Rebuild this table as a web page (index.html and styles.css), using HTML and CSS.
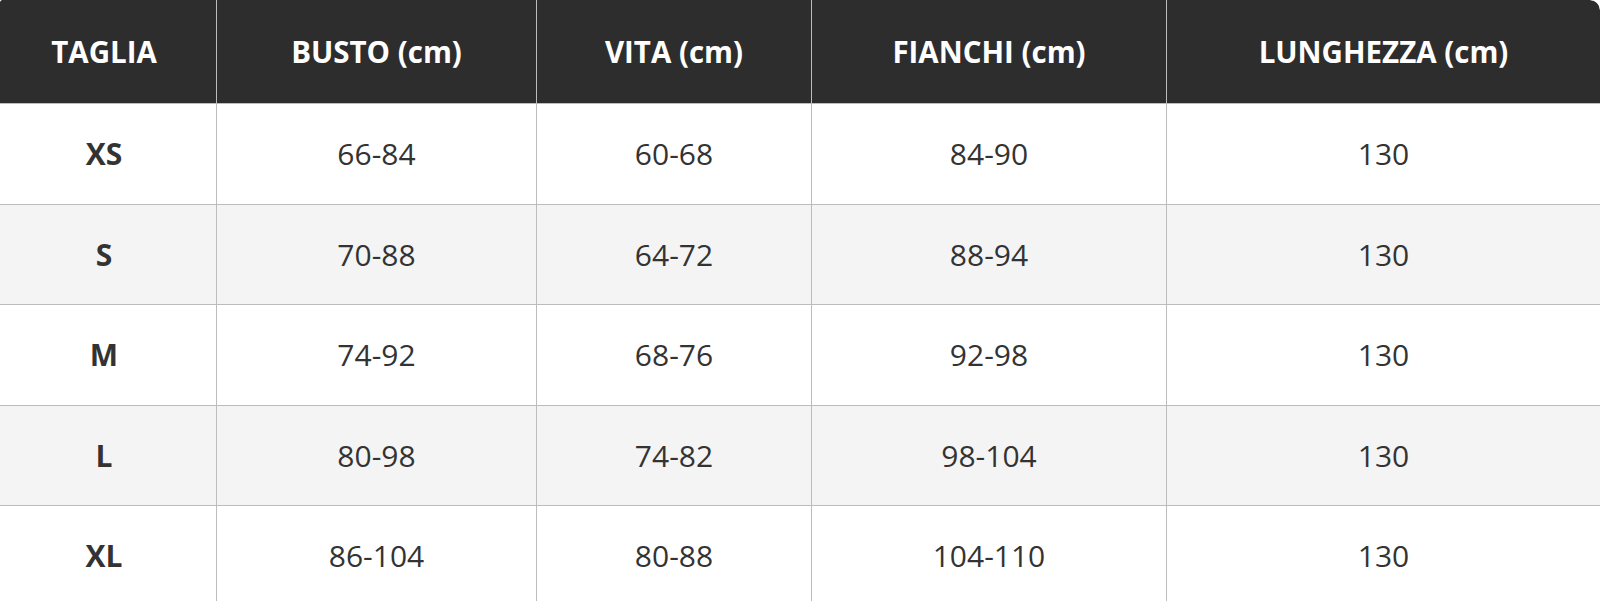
FILE: index.html
```html
<!DOCTYPE html>
<html lang="it">
<head>
<meta charset="utf-8">
<title>Tabella taglie</title>
<link rel="stylesheet" href="styles.css">
</head>
<body>
<table class="size-table">
  <colgroup>
    <col class="c-size">
    <col class="c-bust">
    <col class="c-waist">
    <col class="c-hips">
    <col class="c-length">
  </colgroup>
  <thead>
    <tr>
      <th class="size">TAGLIA</th>
      <th>BUSTO (cm)</th>
      <th>VITA (cm)</th>
      <th>FIANCHI (cm)</th>
      <th class="last">LUNGHEZZA (cm)</th>
    </tr>
  </thead>
  <tbody>
    <tr>
      <td class="size">XS</td><td>66-84</td><td>60-68</td><td>84-90</td><td class="last">130</td>
    </tr>
    <tr class="alt">
      <td class="size">S</td><td>70-88</td><td>64-72</td><td>88-94</td><td class="last">130</td>
    </tr>
    <tr>
      <td class="size">M</td><td>74-92</td><td>68-76</td><td>92-98</td><td class="last">130</td>
    </tr>
    <tr class="alt">
      <td class="size">L</td><td>80-98</td><td>74-82</td><td>98-104</td><td class="last">130</td>
    </tr>
    <tr>
      <td class="size">XL</td><td>86-104</td><td>80-88</td><td>104-110</td><td class="last">130</td>
    </tr>
  </tbody>
</table>
</body>
</html>
```
FILE: styles.css
```css
html, body {
  margin: 0;
  padding: 0;
  background: #ffffff;
}

body {
  font-family: "Open Sans", "Noto Sans", "DejaVu Sans", sans-serif;
  color: #333333;
  overflow: hidden;
}

.size-table {
  width: 1600px;
  table-layout: fixed;
  border-collapse: separate;
  border-spacing: 0;
  border-top-right-radius: 10px;
  border-top-left-radius: 2px;
  overflow: hidden;
}

.c-size { width: 217px; }
.c-bust { width: 320px; }
.c-waist { width: 275px; }
.c-hips { width: 355px; }
.c-length { width: 433px; }

.size-table th,
.size-table td {
  padding: 0;
  text-align: center;
  vertical-align: middle;
  border-right: 1px solid #bcbcbc;
  border-bottom: 1px solid #bcbcbc;
  box-sizing: border-box;
}

.size-table th.last,
.size-table td.last {
  border-right: none;
}

.size-table th.size,
.size-table td.size {
  padding-right: 8px;
}

.size-table th {
  height: 104px;
  background: #2d2d2d;
  color: #ffffff;
  font-size: 29.5px;
  font-weight: 700;
}

.size-table th:first-child {
  border-top-left-radius: 2px;
}

.size-table th:last-child {
  border-top-right-radius: 10px;
}

.size-table td {
  height: 100.5px;
  font-size: 30px;
  font-weight: 500;
  background: #ffffff;
}

.size-table tr.alt td {
  background: #f4f4f4;
}

.size-table td.size {
  font-weight: 700;
}
```
